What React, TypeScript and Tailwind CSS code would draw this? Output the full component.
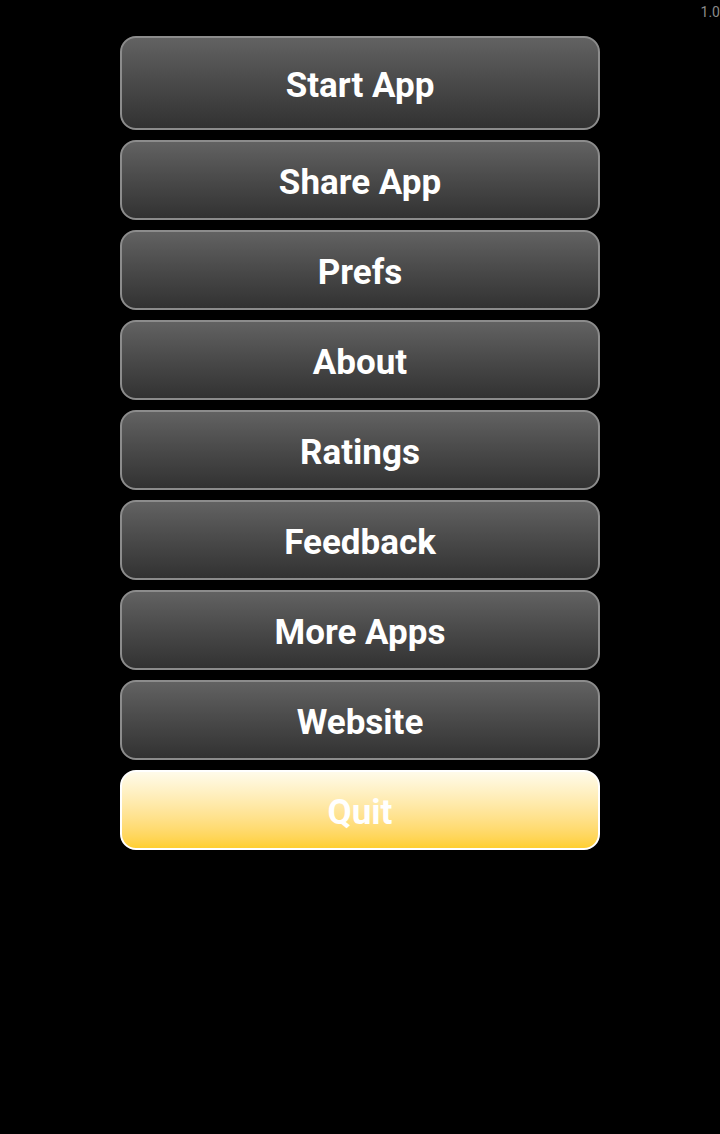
const items = ["Share App", "Prefs", "About", "Ratings", "Feedback", "More Apps", "Website"];

const darkBtn =
  "flex w-full items-center justify-center rounded-[16px] border-2 border-[#8c8c8c] bg-gradient-to-b from-[#626262] to-[#323232] pt-[6px] text-[35px] font-bold text-white";

export default function App() {
  return (
    <main
      className="relative min-h-[1134px] w-[720px] bg-black"
      style={{ fontFamily: "Roboto, 'Liberation Sans', sans-serif" }}
    >
      {/* Version */}
      <span className="absolute right-0 top-[2px] text-[14px] text-[#8a8a8a]">1.0</span>

      <div className="flex flex-col gap-[10px] px-[120px] pt-[36px]">
        <button className={`${darkBtn} h-[94px]`}>Start App</button>
        {items.map((label) => (
          <button key={label} className={`${darkBtn} h-[80px]`}>
            {label}
          </button>
        ))}
        {/* Quit */}
        <button className="flex h-[80px] w-full items-center justify-center rounded-[16px] border-2 border-white bg-gradient-to-b from-[#fffbea] to-[#ffcf2e] pt-[6px] text-[35px] font-bold text-white">
          Quit
        </button>
      </div>
    </main>
  );
}
